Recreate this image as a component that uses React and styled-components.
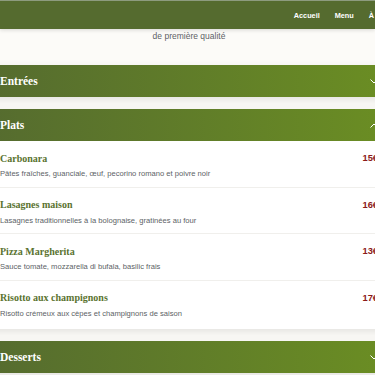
import React from "react";
import styled, { createGlobalStyle } from "styled-components";

const Global = createGlobalStyle`
  html, body { margin: 0; padding: 0; overflow: hidden; }
  body { background: #fcfbf8; font-family: "Liberation Sans", Arial, sans-serif; }
`;

const Header = styled.header`
  height: 28px;
  background: #556b2f;
  border-top: 1px solid #8d9b7f;
  box-shadow: 0 1px 4px rgba(0, 0, 0, 0.15);
  overflow: hidden;
`;

const HeaderInner = styled.div`
  width: 459px;
  height: 100%;
  box-sizing: border-box;
  padding: 0 16px;
  display: flex;
  align-items: center;
  justify-content: flex-end;
`;

const Nav = styled.nav`
  display: flex;
  gap: 15px;
`;

const NavLink = styled.a`
  color: #fff;
  font-size: 7.3px;
  font-weight: 700;
  text-decoration: none;
  white-space: nowrap;
`;

const Page = styled.main`
  width: 410px;
  margin-left: -16px;
`;

const Tagline = styled.p`
  margin: 0;
  padding: 1px 0 23px;
  text-align: center;
  font-size: 8.5px;
  line-height: 12px;
  color: #5c5f66;
`;

const Section = styled.section`
  background: #fff;
  border-radius: 8px;
  overflow: hidden;
  box-shadow: 0 3px 10px rgba(0, 0, 0, 0.1);
  margin-bottom: 12px;
`;

const SectionHead = styled.div`
  height: 32px;
  padding: 0 16px;
  display: flex;
  align-items: center;
  justify-content: space-between;
  background: linear-gradient(90deg, #556b2f, #6b8e23);
  color: #fff;
`;

const SectionTitle = styled.h2`
  margin: 0;
  font-family: "Liberation Serif", "Times New Roman", serif;
  font-weight: 700;
  font-size: 11.5px;
`;

const Items = styled.div`
  padding: 0 0 2px;
`;

const Item = styled.div`
  padding: 10px 16px 6px;
  border-bottom: 1px solid ${(p) => (p.$last ? "transparent" : "#f0efec")};
`;

const ItemTop = styled.div`
  display: flex;
  justify-content: space-between;
  align-items: center;
  height: 14px;
`;

const ItemName = styled.h3`
  margin: 0;
  font-family: "Liberation Serif", "Times New Roman", serif;
  font-weight: 700;
  font-size: 10px;
  color: #5a7330;
`;

const Price = styled.span`
  font-size: 9.3px;
  font-weight: 700;
  color: #8b1a1a;
`;

const Desc = styled.p`
  margin: 3px 0 0;
  font-size: 7.6px;
  line-height: 12.5px;
  color: #5c5f66;
`;

const Chevron = ({ up }) => (
  <svg width="8" height="5" viewBox="0 0 8 5" fill="none">
    <polyline
      points={up ? "0.5,4.5 4,1 7.5,4.5" : "0.5,0.5 4,4 7.5,0.5"}
      stroke="#fff"
      strokeWidth="1"
    />
  </svg>
);

const plats = [
  { name: "Carbonara", desc: "Pâtes fraîches, guanciale, œuf, pecorino romano et poivre noir", price: "15€" },
  { name: "Lasagnes maison", desc: "Lasagnes traditionnelles à la bolognaise, gratinées au four", price: "16€" },
  { name: "Pizza Margherita", desc: "Sauce tomate, mozzarella di bufala, basilic frais", price: "13€" },
  { name: "Risotto aux champignons", desc: "Risotto crémeux aux cèpes et champignons de saison", price: "17€" },
];

export default function App() {
  return (
    <>
      <Global />
      <Header>
        <HeaderInner>
          <Nav>
            <NavLink>Accueil</NavLink>
            <NavLink>Menu</NavLink>
            <NavLink>À propos</NavLink>
            <NavLink>Contact</NavLink>
          </Nav>
        </HeaderInner>
      </Header>
      <Page>
        <Tagline>de première qualité</Tagline>
        <Section>
          <SectionHead>
            <SectionTitle>Entrées</SectionTitle>
            <Chevron />
          </SectionHead>
        </Section>
        <Section>
          <SectionHead>
            <SectionTitle>Plats</SectionTitle>
            <Chevron up />
          </SectionHead>
          <Items>
            {plats.map((p, i) => (
              <Item key={p.name} $last={i === plats.length - 1}>
                <ItemTop>
                  <ItemName>{p.name}</ItemName>
                  <Price>{p.price}</Price>
                </ItemTop>
                <Desc>{p.desc}</Desc>
              </Item>
            ))}
          </Items>
        </Section>
        <Section>
          <SectionHead>
            <SectionTitle>Desserts</SectionTitle>
            <Chevron />
          </SectionHead>
        </Section>
      </Page>
    </>
  );
}
